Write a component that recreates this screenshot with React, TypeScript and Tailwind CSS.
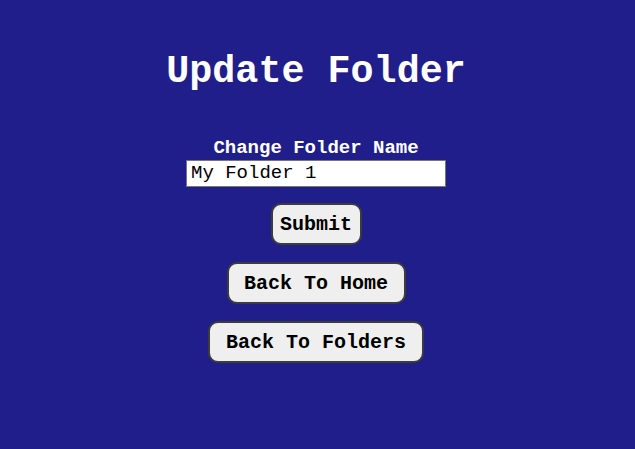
export default function App() {
  const btn =
    "h-[42px] rounded-[10px] border-2 border-[#3c3c3c] bg-[#efefef] text-[20px] font-bold leading-[23px] text-black"

  return (
    <div className="min-h-[449px] w-full bg-[#201e8b] font-['Liberation_Mono',monospace] text-white">
      <div className="flex flex-col items-center pt-[50px] pr-[3px]">
        <h1 className="text-[38.4px] font-bold leading-[44px]">Update Folder</h1>

        <h3 className="mt-[43px] text-[19px] font-bold leading-[22px]">Change Folder Name</h3>
        <input
          className="mt-[1px] h-[27px] w-[260px] border border-[#767676] bg-white px-[4px] text-[19px] text-black outline-none font-['Liberation_Mono',monospace]"
          defaultValue="My Folder 1"
        />

        <button className={`${btn} mt-[16px] w-[91px]`}>Submit</button>
        <button className={`${btn} mt-[17px] w-[179px]`}>Back To Home</button>
        <button className={`${btn} mt-[17px] w-[216px]`}>Back To Folders</button>
      </div>
    </div>
  )
}
